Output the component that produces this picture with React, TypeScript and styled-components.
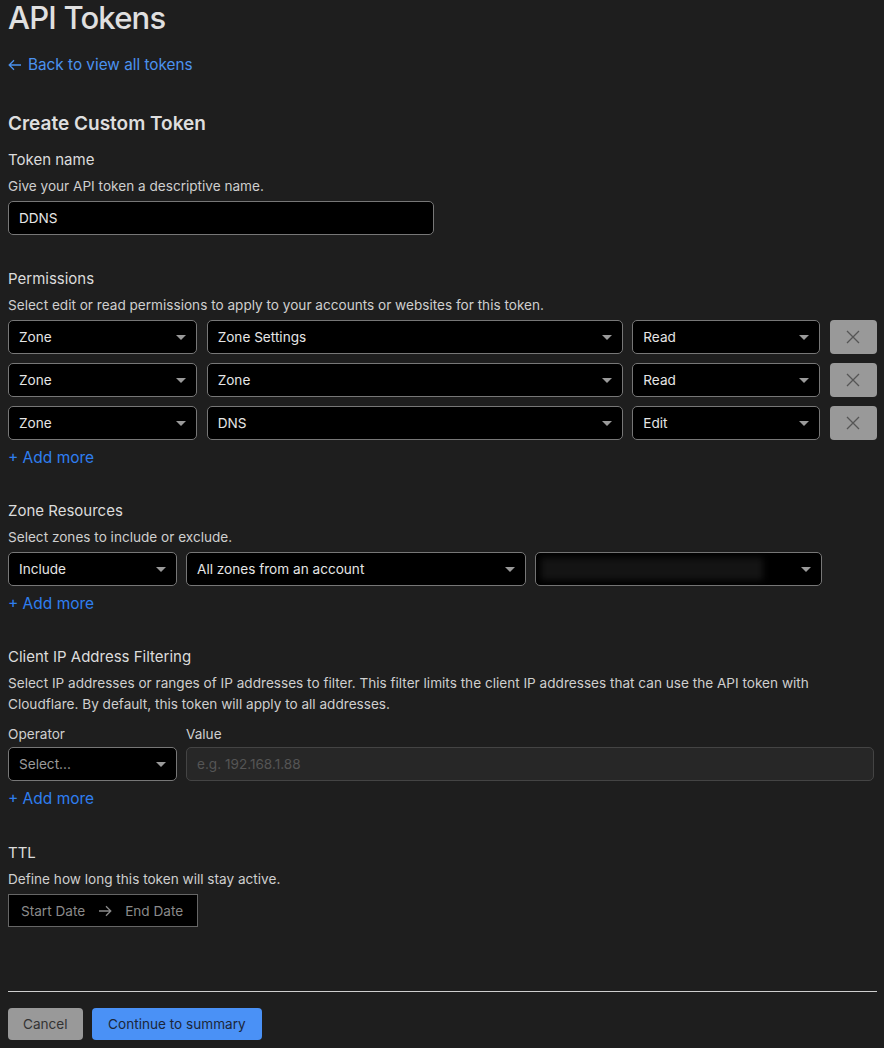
import React from "react";
import styled, { createGlobalStyle } from "styled-components";

const GlobalStyle = createGlobalStyle`
  html, body {
    margin: 0;
    padding: 0;
    background: #1e1e1e;
  }
  body {
    font-family: Inter, "Noto Sans", sans-serif;
    color: #dcdcdc;
  }
`;

const Page = styled.div`
  padding: 0 7px 8px 8px;
  display: flex;
  flex-direction: column;
`;

const Title = styled.h1`
  margin: 0;
  font-size: 31px;
  line-height: 36px;
  font-weight: 500;
  letter-spacing: -0.8px;
  color: #e0e0e0;
`;

const BackLink = styled.a`
  margin-top: 19px;
  font-size: 15.3px;
  line-height: 20px;
  color: #4b92ef;
  display: flex;
  align-items: center;
  gap: 6px;
  cursor: pointer;
`;

const SubTitle = styled.h2`
  margin: 35px 0 0;
  font-size: 19px;
  line-height: 28px;
  font-weight: 600;
  color: #dedede;
`;

const Section = styled.section<{ $top?: number }>`
  margin-top: ${(p) => p.$top ?? 31}px;
  display: flex;
  flex-direction: column;
`;

const Heading = styled.div`
  padding-top: 1px;
  font-size: 15px;
  line-height: 22px;
  color: #dcdcdc;
`;

const Desc = styled.p`
  margin: 5px 0 0;
  font-size: 13.6px;
  line-height: 21px;
  color: #cfcfcf;
`;

const Label = styled.div`
  font-size: 13.6px;
  line-height: 18px;
  color: #cfcfcf;
`;

const TextInput = styled.div<{ $width?: number }>`
  margin-top: 4px;
  width: ${(p) => (p.$width ? `${p.$width}px` : "auto")};
  box-sizing: border-box;
  height: 34px;
  background: #000;
  border: 1px solid #777;
  border-radius: 5px;
  padding: 0 10px;
  display: flex;
  align-items: center;
  font-size: 13.6px;
  color: #e6e6e6;
`;

const Row = styled.div<{ $cols: string; $spread?: boolean }>`
  margin-top: 4px;
  display: grid;
  grid-template-columns: ${(p) => p.$cols};
  column-gap: 9px;
  justify-content: ${(p) => (p.$spread ? "space-between" : "start")};
`;

const Rows = styled.div`
  margin-top: 4px;
  display: flex;
  flex-direction: column;
  gap: 9px;
  & > ${Row} {
    margin-top: 0;
  }
`;

const SelectBox = styled.div<{ $placeholder?: boolean }>`
  position: relative;
  box-sizing: border-box;
  height: 34px;
  background: #000;
  border: 1px solid #777;
  border-radius: 5px;
  padding: 0 30px 0 10px;
  display: flex;
  align-items: center;
  font-size: 13.6px;
  color: ${(p) => (p.$placeholder ? "#9a9a9a" : "#e6e6e6")};
  &::after {
    content: "";
    position: absolute;
    right: 10px;
    top: 50%;
    margin-top: -2px;
    border-left: 5px solid transparent;
    border-right: 5px solid transparent;
    border-top: 5px solid #9a9a9a;
  }
`;

const Blurred = styled.div`
  width: 222px;
  height: 22px;
  margin-left: -5px;
  background: #141414;
  filter: blur(3px);
`;

const RemoveButton = styled.button`
  height: 34px;
  width: 47px;
  border: none;
  border-radius: 4px;
  background: #999;
  display: flex;
  align-items: center;
  justify-content: center;
  padding: 0;
`;

const AddMore = styled.a`
  margin-top: 7px;
  font-size: 15.5px;
  line-height: 22px;
  color: #2f7ef0;
  align-self: flex-start;
  cursor: pointer;
`;

const ValueInput = styled.div`
  box-sizing: border-box;
  height: 34px;
  background: #272727;
  border: 1px solid #444;
  border-radius: 5px;
  padding: 0 10px;
  display: flex;
  align-items: center;
  font-size: 13.6px;
  color: #555;
  margin-right: 3px;
`;

const FieldLabels = styled.div`
  margin-top: 10px;
  display: grid;
  grid-template-columns: 169px 1fr;
  column-gap: 9px;
`;

const DateRange = styled.div`
  margin-top: 4px;
  width: 190px;
  box-sizing: border-box;
  height: 33px;
  background: #000;
  border: 1px solid #666;
  display: flex;
  align-items: center;
  gap: 13px;
  padding: 0 12px;
  font-size: 13.6px;
  color: #8a8a8a;
`;

const Divider = styled.hr`
  margin: 64px 0 0;
  border: none;
  border-top: 1px solid #cfcfcf;
`;

const Actions = styled.div`
  margin-top: 16px;
  display: flex;
  gap: 9px;
`;

const Button = styled.button<{ $primary?: boolean }>`
  height: 32px;
  border: none;
  border-radius: 4px;
  padding: 0 ${(p) => (p.$primary ? 16.5 : 15)}px;
  font-family: inherit;
  font-size: 13.6px;
  background: ${(p) => (p.$primary ? "#4a91f6" : "#999")};
  color: ${(p) => (p.$primary ? "#1b2638" : "#333")};
`;

const CloseIcon = () => (
  <svg width="14" height="14" viewBox="0 0 14 14">
    <path d="M1 1L13 13M13 1L1 13" stroke="#555" strokeWidth="1.3" />
  </svg>
);

const permissions = [
  { scope: "Zone", item: "Zone Settings", level: "Read" },
  { scope: "Zone", item: "Zone", level: "Read" },
  { scope: "Zone", item: "DNS", level: "Edit" },
];

const App = () => {
  return (
    <>
      <GlobalStyle />
      <Page>
        <Title>API Tokens</Title>
        <BackLink>
          <svg width="14" height="12" viewBox="0 0 14 12">
            <path d="M13 6H1.5M6 1.2L1.2 6L6 10.8" stroke="#4b92ef" strokeWidth="1.3" fill="none" />
          </svg>
          Back to view all tokens
        </BackLink>
        <SubTitle>Create Custom Token</SubTitle>

        <Section $top={10}>
          <Heading>Token name</Heading>
          <Desc>Give your API token a descriptive name.</Desc>
          <TextInput $width={426}>DDNS</TextInput>
        </Section>

        <Section $top={32}>
          <Heading>Permissions</Heading>
          <Desc>Select edit or read permissions to apply to your accounts or websites for this token.</Desc>
          <Rows>
            {permissions.map((p, i) => (
              <Row key={i} $cols="189px 416px 188px 47px" $spread>
                <SelectBox>{p.scope}</SelectBox>
                <SelectBox>{p.item}</SelectBox>
                <SelectBox>{p.level}</SelectBox>
                <RemoveButton>
                  <CloseIcon />
                </RemoveButton>
              </Row>
            ))}
          </Rows>
          <AddMore>+ Add more</AddMore>
        </Section>

        <Section $top={30}>
          <Heading>Zone Resources</Heading>
          <Desc>Select zones to include or exclude.</Desc>
          <Row $cols="169px 340px 287px">
            <SelectBox>Include</SelectBox>
            <SelectBox>All zones from an account</SelectBox>
            <SelectBox>
              <Blurred />
            </SelectBox>
          </Row>
          <AddMore>+ Add more</AddMore>
        </Section>

        <Section $top={30}>
          <Heading>Client IP Address Filtering</Heading>
          <Desc>
            Select IP addresses or ranges of IP addresses to filter. This filter limits the client IP addresses
            that can use the API token with Cloudflare. By default, this token will apply to all addresses.
          </Desc>
          <FieldLabels>
            <Label>Operator</Label>
            <Label>Value</Label>
          </FieldLabels>
          <Row $cols="169px 1fr">
            <SelectBox $placeholder>Select...</SelectBox>
            <ValueInput>e.g. 192.168.1.88</ValueInput>
          </Row>
          <AddMore>+ Add more</AddMore>
        </Section>

        <Section>
          <Heading>TTL</Heading>
          <Desc>Define how long this token will stay active.</Desc>
          <DateRange>
            <span>Start Date</span>
            <svg width="14" height="12" viewBox="0 0 14 12">
              <path d="M1 6H12.5M8 1.2L12.8 6L8 10.8" stroke="#8a8a8a" strokeWidth="1.3" fill="none" />
            </svg>
            <span>End Date</span>
          </DateRange>
        </Section>

        <Divider />
        <Actions>
          <Button>Cancel</Button>
          <Button $primary>Continue to summary</Button>
        </Actions>
      </Page>
    </>
  );
};

export default App;
